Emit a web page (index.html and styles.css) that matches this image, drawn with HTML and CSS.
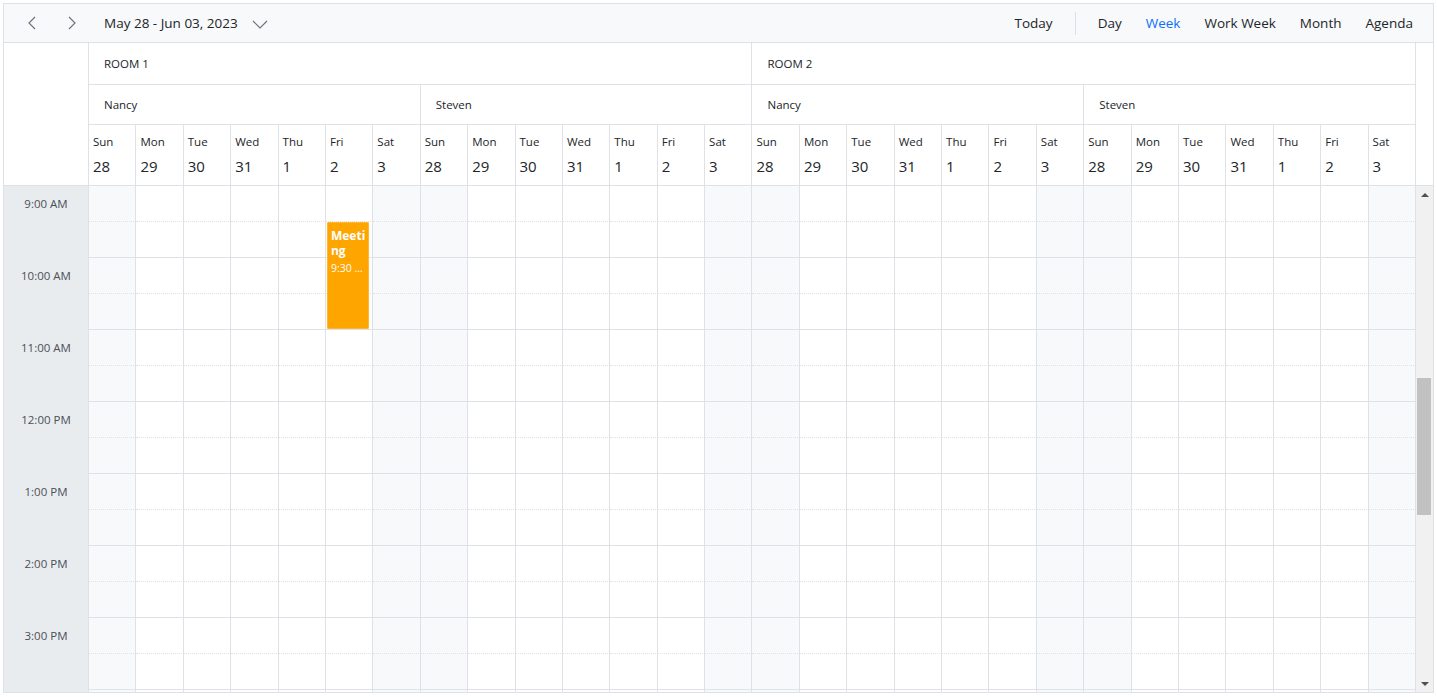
FILE: index.html
```html
<!DOCTYPE html>

<html>
<head>
<title>Scheduler - Week</title>
<link rel="stylesheet" href="styles.css">

<script type="text/javascript">

var dayNames = ["Sun", "Mon", "Tue", "Wed", "Thu", "Fri", "Sat"];
var dayDates = [28, 29, 30, 31, 1, 2, 3];
var groups = 4;
var hours = ["9:00 AM", "10:00 AM", "11:00 AM", "12:00 PM", "1:00 PM", "2:00 PM", "3:00 PM", ""];

function Initialize()
{
	BuildDateHeader();
	BuildTimeColumn();
	BuildWorkCells();
}

function BuildDateHeader()
{
	var header = document.getElementById("header");
	var spacer = document.getElementById("header-spacer");

	for(var g = 0; g < groups; g++)
	{
		for(var d = 0; d < 7; d++)
		{
			var cell = document.createElement("div");
			cell.className = "date-cell";
			cell.innerHTML = '<span class="day-name">' + dayNames[d] + '</span><span class="day-date">' + dayDates[d] + '</span>';
			header.insertBefore(cell, spacer);
		}
	}
}

function BuildTimeColumn()
{
	var column = document.getElementById("time-col");

	for(var i = 0; i < hours.length; i++)
	{
		var cell = document.createElement("div");
		cell.className = "time-cell";
		cell.innerHTML = '<span class="time-label">' + hours[i] + '</span>';
		column.appendChild(cell);
	}
}

function BuildWorkCells()
{
	var cells = document.getElementById("work-cells");

	//Two rows per hour, the first one ends in a dotted line
	for(var r = 0; r < hours.length * 2; r++)
	{
		var row = document.createElement("div");
		row.className = (r % 2 == 0) ? "work-row half" : "work-row";

		for(var c = 0; c < groups * 7; c++)
		{
			var cell = document.createElement("div");
			var day = c % 7;
			cell.className = (day == 0 || day == 6) ? "work-cell off" : "work-cell";
			row.appendChild(cell);
		}
		cells.appendChild(row);
	}
}

</script>
</head>

<body onload="Initialize();">
	<div id="scheduler">
		<div id="toolbar">
			<div class="nav">
				<button class="icon-btn" title="Previous">
					<svg width="10" height="14" viewBox="0 0 10 14"><path d="M8 1 L2 7 L8 13" fill="none" stroke="#6c757d" stroke-width="1.2"/></svg>
				</button>
				<button class="icon-btn" title="Next">
					<svg width="10" height="14" viewBox="0 0 10 14"><path d="M2 1 L8 7 L2 13" fill="none" stroke="#6c757d" stroke-width="1.2"/></svg>
				</button>
				<span class="date-range">May 28 - Jun 03, 2023</span>
				<svg class="range-arrow" width="16" height="9" viewBox="0 0 16 9"><path d="M1 1 L8 8 L15 1" fill="none" stroke="#6c757d" stroke-width="1.2"/></svg>
			</div>
			<div class="views">
				<span class="view-btn">Today</span>
				<span class="separator"></span>
				<span class="view-btn">Day</span>
				<span class="view-btn active">Week</span>
				<span class="view-btn">Work Week</span>
				<span class="view-btn">Month</span>
				<span class="view-btn">Agenda</span>
			</div>
		</div>

		<div id="header">
			<div class="corner"></div>
			<div class="room-cell">ROOM 1</div>
			<div class="room-cell">ROOM 2</div>
			<div class="owner-cell">Nancy</div>
			<div class="owner-cell">Steven</div>
			<div class="owner-cell">Nancy</div>
			<div class="owner-cell">Steven</div>
			<div id="header-spacer"></div>
		</div>

		<div id="content">
			<div id="time-col"></div>
			<div id="work-cells">
				<div class="appointment">
					<div class="subject">Meeting</div>
					<div class="time">9:30 AM - 11:00 AM</div>
				</div>
			</div>
			<div id="scrollbar">
				<div class="scroll-btn"><span class="arrow-up"></span></div>
				<div class="scroll-track"><div class="scroll-thumb"></div></div>
				<div class="scroll-btn"><span class="arrow-down"></span></div>
			</div>
		</div>
	</div>
</body>

</html>
```
FILE: styles.css
```css
body
{
	margin: 3px;
	font-family: "Open Sans", "Noto Sans", sans-serif;
	color: #212529;
	background-color: #fff;
}

#scheduler
{
	height: 690px;
	box-sizing: border-box;
	border: 1px solid #dee2e6;
	display: flex;
	flex-direction: column;
	overflow: hidden;
}

/* toolbar */

#toolbar
{
	height: 39px;
	flex: none;
	box-sizing: border-box;
	border-bottom: 1px solid #dee2e6;
	background-color: #f8f9fa;
	display: flex;
	align-items: center;
	justify-content: space-between;
	padding: 0 8px;
	font-size: 13.5px;
}

.nav, .views
{
	display: flex;
	align-items: center;
}

.icon-btn
{
	width: 40px;
	height: 30px;
	border: none;
	background: none;
	padding: 0;
	display: flex;
	align-items: center;
	justify-content: center;
}

.date-range
{
	margin-left: 12px;
}

.range-arrow
{
	margin-left: 14px;
	margin-top: 2px;
}

.view-btn
{
	padding: 0 12px;
}

.view-btn.active
{
	color: #0d6efd;
}

.separator
{
	width: 1px;
	height: 23px;
	margin: 0 10px;
	background-color: #dee2e6;
}

/* header */

#header
{
	flex: none;
	display: grid;
	grid-template-columns: 85px repeat(28, 1fr) 17px;
	grid-template-rows: 42px 40px 61px;
	font-size: 11.5px;
}

#header > div
{
	box-sizing: border-box;
	border-right: 1px solid #dee2e6;
	border-bottom: 1px solid #dee2e6;
}

#header .corner
{
	grid-row: 1 / 4;
	grid-column: 1;
}

#header #header-spacer
{
	grid-row: 1 / 4;
	grid-column: 30;
	border-right: none;
}

.room-cell, .owner-cell
{
	display: flex;
	align-items: center;
	padding-left: 15px;
}

.room-cell
{
	grid-column: span 14;
	grid-row: 1;
}

.owner-cell
{
	grid-column: span 7;
	grid-row: 2;
}

.date-cell
{
	grid-row: 3;
	padding: 9px 0 0 4px;
}

.day-name
{
	display: block;
	line-height: 16px;
	font-size: 11.5px;
}

.day-date
{
	display: block;
	margin-top: 4px;
	line-height: 24px;
	font-size: 15px;
}

/* content */

#content
{
	flex: 1;
	display: flex;
	overflow: hidden;
}

#time-col
{
	width: 85px;
	flex: none;
	box-sizing: border-box;
	border-right: 1px solid #dee2e6;
	background-color: #e9ecef;
}

.time-cell
{
	height: 72px;
}

.time-label
{
	display: block;
	height: 36px;
	line-height: 36px;
	text-align: center;
	font-size: 11.5px;
	color: #495057;
}

#work-cells
{
	flex: 1;
	position: relative;
}

.work-row
{
	display: grid;
	grid-template-columns: repeat(28, 1fr);
	height: 36px;
}

.work-cell
{
	box-sizing: border-box;
	border-right: 1px solid #dee2e6;
	border-bottom: 1px solid #dee2e6;
}

.work-row.half .work-cell
{
	border-bottom-style: dotted;
}

.work-cell.off
{
	background-color: #f8f9fa;
}

.appointment
{
	position: absolute;
	top: 36px;
	left: calc(100% * 5 / 28 + 1px);
	width: calc(100% / 28 - 5px);
	height: 107px;
	box-sizing: border-box;
	background-color: #ffa500;
	border: 1px solid #ffb733;
	border-radius: 1px;
	color: #fff;
	padding: 5px 3px;
	overflow: hidden;
}

.appointment .subject
{
	font-size: 12px;
	font-weight: 700;
	line-height: 15px;
	overflow-wrap: anywhere;
}

.appointment .time
{
	font-size: 10.5px;
	line-height: 16px;
	margin-top: 2px;
	white-space: nowrap;
	overflow: hidden;
	text-overflow: ellipsis;
}

/* scrollbar */

#scrollbar
{
	width: 17px;
	flex: none;
	display: flex;
	flex-direction: column;
	background-color: #f1f1f1;
}

.scroll-btn
{
	height: 17px;
	display: flex;
	align-items: center;
	justify-content: center;
}

.scroll-track
{
	flex: 1;
}

.scroll-thumb
{
	margin: 175px 2px 0 1px;
	height: 137px;
	background-color: #c1c1c1;
}

.arrow-up
{
	border-left: 4px solid transparent;
	border-right: 4px solid transparent;
	border-bottom: 4px solid #505050;
}

.arrow-down
{
	border-left: 4px solid transparent;
	border-right: 4px solid transparent;
	border-top: 4px solid #505050;
}
```
